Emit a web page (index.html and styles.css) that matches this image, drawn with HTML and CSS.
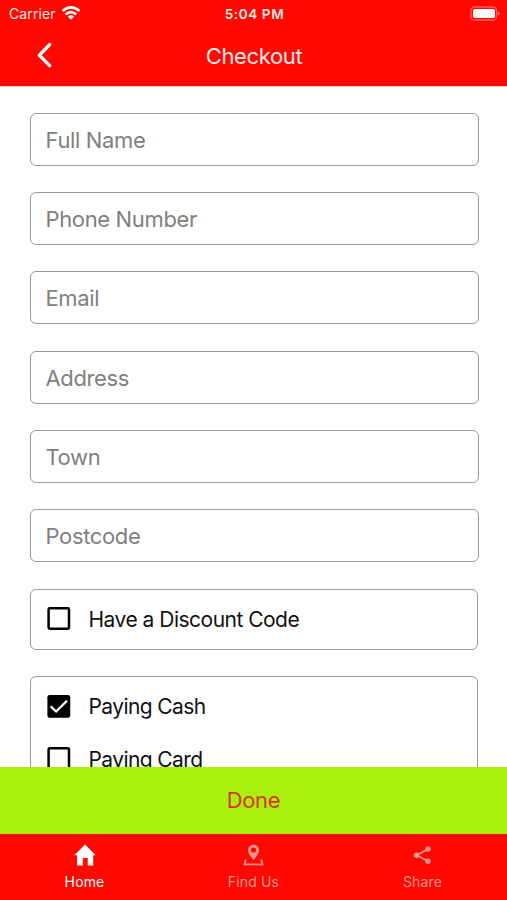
FILE: index.html
```html
<!DOCTYPE html>
<html lang="en">
<head>
<meta charset="utf-8">
<title>Checkout</title>
<link rel="stylesheet" href="styles.css">
</head>
<body>
<div class="app">
  <header class="header">
    <div class="status">
      <div class="carrier"><span>Carrier</span>
        <svg width="20" height="15" viewBox="0 0 20 15" fill="none" stroke="#fff" stroke-width="2.7"><path d="M1.5 5Q10-2.2 18.5 5M4.7 8.4Q10 3.8 15.3 8.4"/><path d="M6.8 10.5Q10 7.9 13.2 10.5L10 13.8Z" fill="#fff" stroke="none"/></svg>
      </div>
      <span class="time">5:04 PM</span>
      <svg class="battery" width="31" height="15" viewBox="0 0 31 15"><rect x="2" y="1" width="25.5" height="13" rx="3.5" fill="none" stroke="#fff" stroke-opacity=".35" stroke-width="1.3"/><rect x="4" y="3" width="22" height="9" rx="1.8" fill="#fff"/><path d="M28.8 5.2Q30.5 6 30.5 7.5T28.8 9.8Z" fill="#fff" fill-opacity=".45"/></svg>
    </div>
    <div class="titlebar">
      <svg class="back" width="18" height="28" viewBox="0 0 18 28" fill="none" stroke="#fff" stroke-width="3.5" stroke-linecap="round" stroke-linejoin="round"><path d="M14.6 2.6L4.4 13.1l10.2 10.5"/></svg>
      <h1 class="title">Checkout</h1>
    </div>
  </header>
  <main class="form">
    <div class="field"><span>Full Name</span></div>
    <div class="field"><span>Phone Number</span></div>
    <div class="field"><span>Email</span></div>
    <div class="field"><span>Address</span></div>
    <div class="field"><span>Town</span></div>
    <div class="field"><span>Postcode</span></div>
    <div class="group single">
      <div class="option"><svg class="box" viewBox="0 0 24 24"><rect x="1.6" y="1.3" width="20.4" height="20.4" rx="1.2" fill="none" stroke="#000" stroke-width="2.5"/></svg><span>Have a Discount Code</span></div>
    </div>
    <div class="group payment">
      <div class="option"><svg class="box" viewBox="0 0 24 24"><rect x=".4" y="0" width="22.8" height="22.8" rx="2.2"/><path d="M3.7 11.3l5.4 5.2L20 5.8" fill="none" stroke="#fff" stroke-width="2.3"/></svg><span>Paying Cash</span></div>
      <div class="option"><svg class="box" viewBox="0 0 24 24"><rect x="1.6" y="1.3" width="20.4" height="20.4" rx="1.2" fill="none" stroke="#000" stroke-width="2.5"/></svg><span>Paying Card</span></div>
    </div>
  </main>
  <div class="done">Done</div>
  <nav class="tabs">
    <div class="tab active"><svg width="24" height="24" viewBox="0 0 24 24" fill="currentColor"><path d="M12 1.4L22.6 12.2H20.2v10.4h-5.5v-7.7H9.8v7.7H4.1V12.2H1.4Z"/></svg><span>Home</span></div>
    <div class="tab"><svg width="24" height="24" viewBox="0 0 24 24" fill="currentColor"><path fill-rule="evenodd" d="M11.5 17.4C8.5 13.4 6 10.6 6 7.1a5.5 5.5 0 0 1 11 0c0 3.5-2.5 6.3-5.5 10.3ZM11.5 4.4a2.7 2.7 0 1 0 0 5.4 2.7 2.7 0 0 0 0-5.4Z"/><path d="M3.8 16.4L2.5 21.4h18l-1.3-5" fill="none" stroke="currentColor" stroke-width="1.8"/></svg><span>Find Us</span></div>
    <div class="tab"><svg width="24" height="24" viewBox="0 0 24 24" fill="currentColor"><path d="M17.2 6L5.5 12.2l11.7 6" fill="none" stroke="currentColor" stroke-width="1.7"/><circle cx="17" cy="6" r="2.7"/><circle cx="5.5" cy="12.2" r="2.7"/><circle cx="17" cy="18.3" r="2.7"/></svg><span>Share</span></div>
  </nav>
</div>
</body>
</html>
```
FILE: styles.css
```css
* { box-sizing: border-box; }
body { margin: 0; font-family: Inter, sans-serif; background: #fff; }
svg { display: block; flex: none; }
.app { height: 900px; display: flex; flex-direction: column; overflow: hidden; }
.header { height: 86px; flex: none; background: #ff0800; color: #ffe9e8; }
.status { height: 27px; padding: 0 7px 0 9px; display: grid; grid-template-columns: 1fr auto 1fr; align-items: center; font-size: 14px; }
.carrier { display: flex; align-items: center; gap: 5px; letter-spacing: .1px; }
.time { font-weight: 600; font-size: 13.5px; letter-spacing: .6px; }
.battery { justify-self: end; }
.titlebar { height: 57px; padding: 0 35px; display: grid; grid-template-columns: 1fr auto 1fr; align-items: center; }
.title { grid-column: 2; margin: 0; font-weight: 400; font-size: 22px; letter-spacing: -.35px; padding: 1px 0 0 1px; }
.form { height: 681px; flex: none; padding: 26.5px 28.5px 0 29.5px; overflow: hidden; border-top: 1px solid #ffc4c2; }
.form { padding-top: 25.5px; }
.field { height: 53px; margin-bottom: 26.4px; padding: 1px 0 0 15px; border: 1.4px solid #999; border-radius: 6px; display: flex; align-items: center; color: #808080; font-size: 22px; letter-spacing: -.36px; }
.group { border: 1.4px solid #999; border-radius: 6px; margin-right: 1px; padding: 3px 16px; }
.single { height: 61px; margin-bottom: 26.5px; }
.payment { height: 115px; }
.payment .option { letter-spacing: -.6px; }
.option { height: 52.5px; display: flex; align-items: center; gap: 18px; font-size: 21px; letter-spacing: -.51px; color: #111; }
.box { width: 24px; height: 24px; }
.done { height: 67px; flex: none; display: flex; align-items: center; justify-content: center; padding-bottom: 1px; background: #a9ef0d; color: #dc3608; font-size: 22px; letter-spacing: -.3px; }
.tabs { height: 66px; flex: none; display: grid; grid-template-columns: repeat(3, 1fr); background: #ff0800; border-top: 1px solid #ef1c05; }
.tab { display: flex; flex-direction: column; align-items: center; padding-top: 8px; gap: 6px; color: #ff9692; font-size: 14px; line-height: 18px; letter-spacing: .15px; }
.active { color: #fff; }
```
